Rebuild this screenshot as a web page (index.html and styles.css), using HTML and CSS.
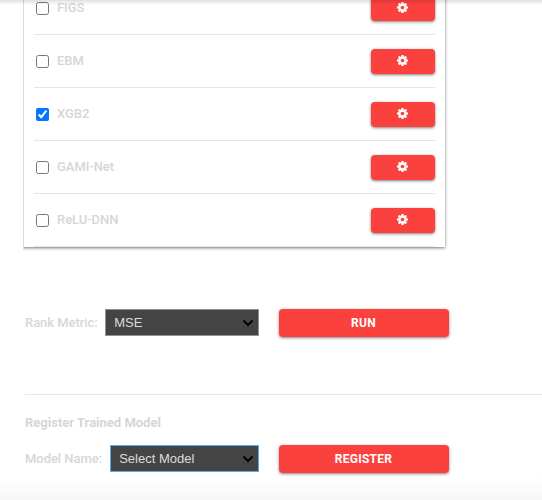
FILE: index.html
```html
<!DOCTYPE html>
<html lang="en">
<head>
<meta charset="utf-8">
<title>Model Training</title>
<link rel="stylesheet" href="styles.css">
</head>
<body>
<svg class="defs" width="0" height="0" aria-hidden="true">
  <symbol id="gear" viewBox="0 0 1536 1536">
    <path d="M1024 768q0-106-75-181t-181-75-181 75-75 181 75 181 181 75 181-75 75-181zm512-109v222q0 12-8 23t-20 13l-185 28q-19 54-39 91 35 50 107 138 10 12 10 25t-9 23q-27 37-99 108t-94 71q-12 0-26-9l-138-108q-44 23-91 38-16 136-29 186-7 28-36 28H657q-14 0-24.500-8.500T621 1506l-28-184q-49-16-90-37l-141 107q-10 9-25 9-14 0-25-11-126-114-165-168-7-10-7-23 0-12 8-23 15-21 51-66.500t54-70.500q-27-50-41-99L29 913q-13-2-21-12.500T0 877V655q0-12 8-23t19-13l186-28q14-46 39-92-40-57-107-138-10-12-10-24 0-10 9-23 26-36 98.500-107.500T337 135q13 0 26 10l138 107q44-23 91-38 16-136 29-186 7-28 36-28h222q14 0 24.500 8.500T915 30l28 184q49 16 90 37l142-107q9-9 24-9 13 0 25 10 129 119 165 170 7 8 7 22 0 12-8 23-15 21-51 66.500t-54 70.500q26 50 41 98l183 28q13 2 21 12.500t8 23.500z"/>
  </symbol>
</svg>
<main class="page">
  <section class="card">
    <div class="row"><label class="model"><input type="checkbox" class="check">FIGS</label><button class="btn small" aria-label="Settings"><svg class="gear"><use href="#gear"/></svg></button></div>
    <div class="row"><label class="model"><input type="checkbox" class="check">EBM</label><button class="btn small" aria-label="Settings"><svg class="gear"><use href="#gear"/></svg></button></div>
    <div class="row"><label class="model"><input type="checkbox" class="check" checked>XGB2</label><button class="btn small" aria-label="Settings"><svg class="gear"><use href="#gear"/></svg></button></div>
    <div class="row"><label class="model"><input type="checkbox" class="check">GAMI-Net</label><button class="btn small" aria-label="Settings"><svg class="gear"><use href="#gear"/></svg></button></div>
    <div class="row"><label class="model"><input type="checkbox" class="check">ReLU-DNN</label><button class="btn small" aria-label="Settings"><svg class="gear"><use href="#gear"/></svg></button></div>
  </section>
  <div class="form rank">
    <span class="label">Rank Metric:</span>
    <div class="select"><span>MSE</span><svg class="chevron" viewBox="0 0 12 8"><path d="M1.500 1.500 6 6l4.500-4.500"/></svg></div>
    <button class="btn wide">RUN</button>
  </div>
  <section class="register">
    <h2 class="title">Register Trained Model</h2>
    <div class="form">
      <span class="label">Model Name:</span>
      <div class="select focused"><span>Select Model</span><svg class="chevron" viewBox="0 0 12 8"><path d="M1.500 1.500 6 6l4.500-4.500"/></svg></div>
      <button class="btn wide">REGISTER</button>
    </div>
  </section>
</main>
<div class="edge top"></div>
<div class="edge bottom"></div>
</body>
</html>
```
FILE: styles.css
```css
* { box-sizing: border-box; }
body {
  margin: 0;
  height: 500px;
  overflow: hidden;
  background: #fff;
  color: #d6d6d6;
  font: 500 13px/18px Roboto, sans-serif;
}
.defs { display: block; }
.page { height: 500px; overflow: hidden; padding-left: 23px; }
.card {
  width: 422px;
  margin-top: -18px;
  padding: 0 9px 0 10px;
  border-left: 1px solid #dcdcdc;
  box-shadow: 0 1px 3px rgba(0, 0, 0, .55);
  clip-path: inset(0 -3px -6px 0);
}
.row {
  display: flex;
  align-items: center;
  justify-content: space-between;
  height: 53px;
  width: 401px;
  border-bottom: 1px solid #e6e6e6;
}
.model { display: flex; align-items: center; letter-spacing: -.05px; }
.check { width: 13px; height: 13px; margin: 1px 8px 0 2px; }
.btn {
  display: flex;
  align-items: center;
  justify-content: center;
  padding: 0;
  border: 0;
  border-radius: 4px;
  background: #fb413e;
  color: #fff;
  font: 700 12px/16px Roboto, sans-serif;
  letter-spacing: .25px;
  box-shadow: 0 1px 3px rgba(0, 0, 0, .5);
}
.small { width: 64px; height: 25px; margin-top: 1px; padding-right: 1px; }
.wide { width: 170px; height: 28px; margin-left: 20px; padding-right: 1px; }
.gear { width: 11px; height: 11px; margin-bottom: 2px; fill: #fff; }
.form { display: flex; align-items: center; height: 28px; width: 424px; }
.rank { margin: 62px 0 57px 2px; }
.label { white-space: nowrap; letter-spacing: -.05px; }
.select {
  flex: 1;
  display: flex;
  align-items: center;
  justify-content: space-between;
  height: 27px;
  margin: 0 0 1px 7.500px;
  padding: 0 4px 0 8px;
  border: 1px solid #929292;
  background: #444;
  color: #dcdcdc;
  font: 13px/16px "Liberation Sans", sans-serif;
}
.focused { margin-left: 8.200px; border-color: #58adeb; }
.chevron { width: 12px; height: 8px; margin-top: 1px; fill: none; stroke: #000; stroke-width: 2; }
.register { margin-left: 2px; border-top: 1px solid #e6e6e6; padding-top: 19px; }
.title { margin: 0 0 13px; font: 700 13px/18px Roboto, sans-serif; }
.edge { position: absolute; left: 0; right: 0; pointer-events: none; }
.top { top: 0; height: 5px; background: linear-gradient(rgba(0, 0, 0, .12), transparent); }
.bottom { bottom: 0; height: 24px; background: linear-gradient(transparent, rgba(0, 0, 0, .03)); }
```
